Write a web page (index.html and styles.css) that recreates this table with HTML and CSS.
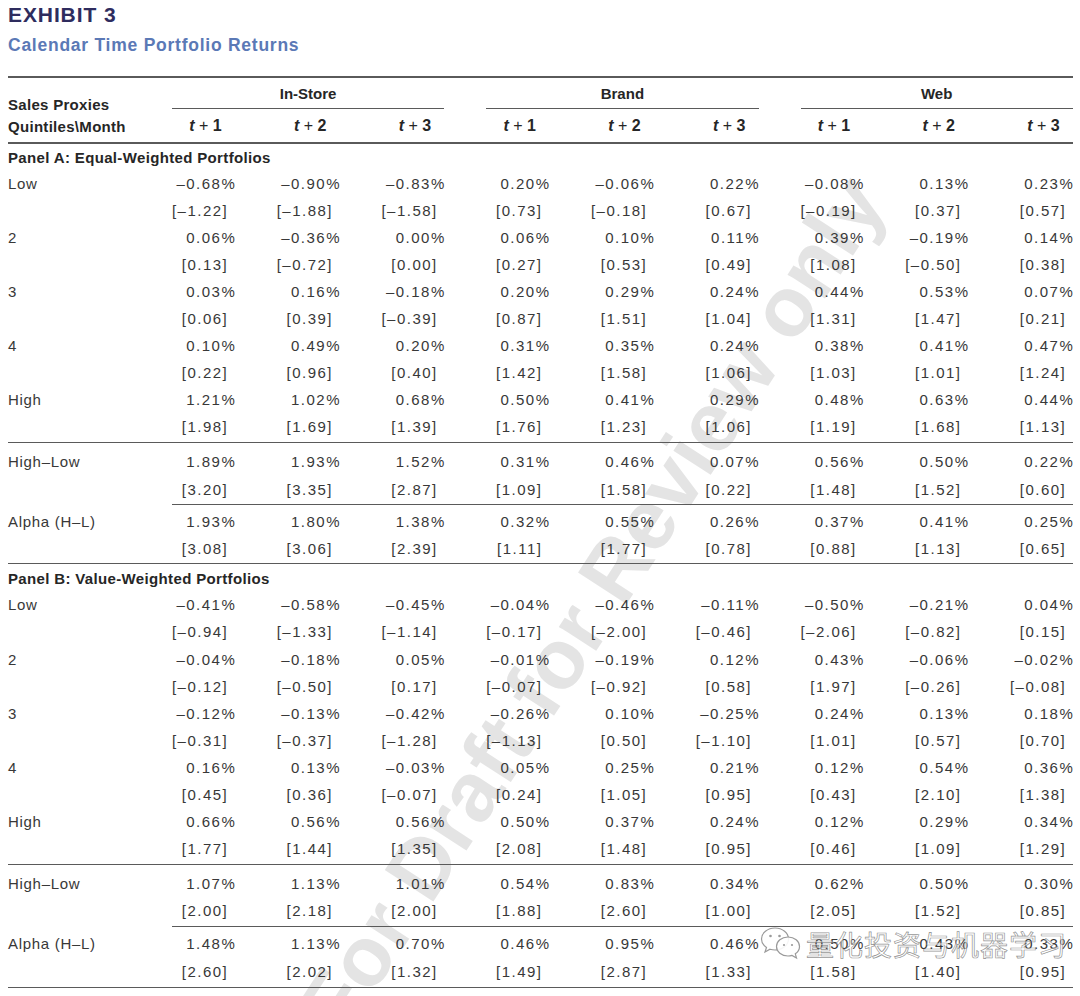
FILE: index.html
```html
<!DOCTYPE html>
<html lang="en">
<head>
<meta charset="utf-8">
<title>Exhibit 3</title>
<link rel="stylesheet" href="styles.css">
</head>
<body>
<div class="watermark">For Draft for Review only</div>
<div class="page">
  <h1 class="exhibit">EXHIBIT 3</h1>
  <h2 class="subtitle">Calendar Time Portfolio Returns</h2>

  <div class="table">
    <div class="thead">
      <div class="stub">Sales Proxies<br>Quintiles\Month</div>
      <div class="group">In-Store</div>
      <div class="group">Brand</div>
      <div class="group">Web</div>
      <div class="sub"><i>t</i> <span class="plus">+</span> 1</div>
      <div class="sub"><i>t</i> <span class="plus">+</span> 2</div>
      <div class="sub"><i>t</i> <span class="plus">+</span> 3</div>
      <div class="sub"><i>t</i> <span class="plus">+</span> 1</div>
      <div class="sub"><i>t</i> <span class="plus">+</span> 2</div>
      <div class="sub"><i>t</i> <span class="plus">+</span> 3</div>
      <div class="sub"><i>t</i> <span class="plus">+</span> 1</div>
      <div class="sub"><i>t</i> <span class="plus">+</span> 2</div>
      <div class="sub"><i>t</i> <span class="plus">+</span> 3</div>
    </div>

    <div class="panel-title first">Panel A: Equal-Weighted Portfolios</div>
    <div class="block quint">
      <div class="row"><div class="lab">Low</div><div class="c">–0.68%</div><div class="c">–0.90%</div><div class="c">–0.83%</div><div class="c">0.20%</div><div class="c">–0.06%</div><div class="c">0.22%</div><div class="c">–0.08%</div><div class="c">0.13%</div><div class="c">0.23%</div></div>
      <div class="row t"><div class="lab"></div><div class="c">[–1.22]</div><div class="c">[–1.88]</div><div class="c">[–1.58]</div><div class="c">[0.73]</div><div class="c">[–0.18]</div><div class="c">[0.67]</div><div class="c">[–0.19]</div><div class="c">[0.37]</div><div class="c">[0.57]</div></div>
      <div class="row"><div class="lab">2</div><div class="c">0.06%</div><div class="c">–0.36%</div><div class="c">0.00%</div><div class="c">0.06%</div><div class="c">0.10%</div><div class="c">0.11%</div><div class="c">0.39%</div><div class="c">–0.19%</div><div class="c">0.14%</div></div>
      <div class="row t"><div class="lab"></div><div class="c">[0.13]</div><div class="c">[–0.72]</div><div class="c">[0.00]</div><div class="c">[0.27]</div><div class="c">[0.53]</div><div class="c">[0.49]</div><div class="c">[1.08]</div><div class="c">[–0.50]</div><div class="c">[0.38]</div></div>
      <div class="row"><div class="lab">3</div><div class="c">0.03%</div><div class="c">0.16%</div><div class="c">–0.18%</div><div class="c">0.20%</div><div class="c">0.29%</div><div class="c">0.24%</div><div class="c">0.44%</div><div class="c">0.53%</div><div class="c">0.07%</div></div>
      <div class="row t"><div class="lab"></div><div class="c">[0.06]</div><div class="c">[0.39]</div><div class="c">[–0.39]</div><div class="c">[0.87]</div><div class="c">[1.51]</div><div class="c">[1.04]</div><div class="c">[1.31]</div><div class="c">[1.47]</div><div class="c">[0.21]</div></div>
      <div class="row"><div class="lab">4</div><div class="c">0.10%</div><div class="c">0.49%</div><div class="c">0.20%</div><div class="c">0.31%</div><div class="c">0.35%</div><div class="c">0.24%</div><div class="c">0.38%</div><div class="c">0.41%</div><div class="c">0.47%</div></div>
      <div class="row t"><div class="lab"></div><div class="c">[0.22]</div><div class="c">[0.96]</div><div class="c">[0.40]</div><div class="c">[1.42]</div><div class="c">[1.58]</div><div class="c">[1.06]</div><div class="c">[1.03]</div><div class="c">[1.01]</div><div class="c">[1.24]</div></div>
      <div class="row"><div class="lab">High</div><div class="c">1.21%</div><div class="c">1.02%</div><div class="c">0.68%</div><div class="c">0.50%</div><div class="c">0.41%</div><div class="c">0.29%</div><div class="c">0.48%</div><div class="c">0.63%</div><div class="c">0.44%</div></div>
      <div class="row t"><div class="lab"></div><div class="c">[1.98]</div><div class="c">[1.69]</div><div class="c">[1.39]</div><div class="c">[1.76]</div><div class="c">[1.23]</div><div class="c">[1.06]</div><div class="c">[1.19]</div><div class="c">[1.68]</div><div class="c">[1.13]</div></div>
    </div>
    <div class="block hl">
      <div class="row"><div class="lab">High–Low</div><div class="c">1.89%</div><div class="c">1.93%</div><div class="c">1.52%</div><div class="c">0.31%</div><div class="c">0.46%</div><div class="c">0.07%</div><div class="c">0.56%</div><div class="c">0.50%</div><div class="c">0.22%</div></div>
      <div class="row t"><div class="lab"></div><div class="c">[3.20]</div><div class="c">[3.35]</div><div class="c">[2.87]</div><div class="c">[1.09]</div><div class="c">[1.58]</div><div class="c">[0.22]</div><div class="c">[1.48]</div><div class="c">[1.52]</div><div class="c">[0.60]</div></div>
    </div>
    <div class="partial-rule"></div>
    <div class="block alpha">
      <div class="row"><div class="lab">Alpha (H–L)</div><div class="c">1.93%</div><div class="c">1.80%</div><div class="c">1.38%</div><div class="c">0.32%</div><div class="c">0.55%</div><div class="c">0.26%</div><div class="c">0.37%</div><div class="c">0.41%</div><div class="c">0.25%</div></div>
      <div class="row t"><div class="lab"></div><div class="c">[3.08]</div><div class="c">[3.06]</div><div class="c">[2.39]</div><div class="c">[1.11]</div><div class="c">[1.77]</div><div class="c">[0.78]</div><div class="c">[0.88]</div><div class="c">[1.13]</div><div class="c">[0.65]</div></div>
    </div>

    <div class="panel-title second">Panel B: Value-Weighted Portfolios</div>
    <div class="block quint">
      <div class="row"><div class="lab">Low</div><div class="c">–0.41%</div><div class="c">–0.58%</div><div class="c">–0.45%</div><div class="c">–0.04%</div><div class="c">–0.46%</div><div class="c">–0.11%</div><div class="c">–0.50%</div><div class="c">–0.21%</div><div class="c">0.04%</div></div>
      <div class="row t"><div class="lab"></div><div class="c">[–0.94]</div><div class="c">[–1.33]</div><div class="c">[–1.14]</div><div class="c">[–0.17]</div><div class="c">[–2.00]</div><div class="c">[–0.46]</div><div class="c">[–2.06]</div><div class="c">[–0.82]</div><div class="c">[0.15]</div></div>
      <div class="row"><div class="lab">2</div><div class="c">–0.04%</div><div class="c">–0.18%</div><div class="c">0.05%</div><div class="c">–0.01%</div><div class="c">–0.19%</div><div class="c">0.12%</div><div class="c">0.43%</div><div class="c">–0.06%</div><div class="c">–0.02%</div></div>
      <div class="row t"><div class="lab"></div><div class="c">[–0.12]</div><div class="c">[–0.50]</div><div class="c">[0.17]</div><div class="c">[–0.07]</div><div class="c">[–0.92]</div><div class="c">[0.58]</div><div class="c">[1.97]</div><div class="c">[–0.26]</div><div class="c">[–0.08]</div></div>
      <div class="row"><div class="lab">3</div><div class="c">–0.12%</div><div class="c">–0.13%</div><div class="c">–0.42%</div><div class="c">–0.26%</div><div class="c">0.10%</div><div class="c">–0.25%</div><div class="c">0.24%</div><div class="c">0.13%</div><div class="c">0.18%</div></div>
      <div class="row t"><div class="lab"></div><div class="c">[–0.31]</div><div class="c">[–0.37]</div><div class="c">[–1.28]</div><div class="c">[–1.13]</div><div class="c">[0.50]</div><div class="c">[–1.10]</div><div class="c">[1.01]</div><div class="c">[0.57]</div><div class="c">[0.70]</div></div>
      <div class="row"><div class="lab">4</div><div class="c">0.16%</div><div class="c">0.13%</div><div class="c">–0.03%</div><div class="c">0.05%</div><div class="c">0.25%</div><div class="c">0.21%</div><div class="c">0.12%</div><div class="c">0.54%</div><div class="c">0.36%</div></div>
      <div class="row t"><div class="lab"></div><div class="c">[0.45]</div><div class="c">[0.36]</div><div class="c">[–0.07]</div><div class="c">[0.24]</div><div class="c">[1.05]</div><div class="c">[0.95]</div><div class="c">[0.43]</div><div class="c">[2.10]</div><div class="c">[1.38]</div></div>
      <div class="row"><div class="lab">High</div><div class="c">0.66%</div><div class="c">0.56%</div><div class="c">0.56%</div><div class="c">0.50%</div><div class="c">0.37%</div><div class="c">0.24%</div><div class="c">0.12%</div><div class="c">0.29%</div><div class="c">0.34%</div></div>
      <div class="row t"><div class="lab"></div><div class="c">[1.77]</div><div class="c">[1.44]</div><div class="c">[1.35]</div><div class="c">[2.08]</div><div class="c">[1.48]</div><div class="c">[0.95]</div><div class="c">[0.46]</div><div class="c">[1.09]</div><div class="c">[1.29]</div></div>
    </div>
    <div class="block hl">
      <div class="row"><div class="lab">High–Low</div><div class="c">1.07%</div><div class="c">1.13%</div><div class="c">1.01%</div><div class="c">0.54%</div><div class="c">0.83%</div><div class="c">0.34%</div><div class="c">0.62%</div><div class="c">0.50%</div><div class="c">0.30%</div></div>
      <div class="row t"><div class="lab"></div><div class="c">[2.00]</div><div class="c">[2.18]</div><div class="c">[2.00]</div><div class="c">[1.88]</div><div class="c">[2.60]</div><div class="c">[1.00]</div><div class="c">[2.05]</div><div class="c">[1.52]</div><div class="c">[0.85]</div></div>
    </div>
    <div class="partial-rule"></div>
    <div class="block alpha last">
      <div class="row"><div class="lab">Alpha (H–L)</div><div class="c">1.48%</div><div class="c">1.13%</div><div class="c">0.70%</div><div class="c">0.46%</div><div class="c">0.95%</div><div class="c">0.46%</div><div class="c">0.50%</div><div class="c">0.43%</div><div class="c">0.33%</div></div>
      <div class="row t"><div class="lab"></div><div class="c">[2.60]</div><div class="c">[2.02]</div><div class="c">[1.32]</div><div class="c">[1.49]</div><div class="c">[2.87]</div><div class="c">[1.33]</div><div class="c">[1.58]</div><div class="c">[1.40]</div><div class="c">[0.95]</div></div>
    </div>
  </div>
</div>

<div class="wechat">
  <svg class="wechat-icon" width="44" height="36" viewBox="0 0 44 36" aria-hidden="true">
    <path d="M15 2 C7.5 2 1.5 7 1.5 13 C1.5 16.5 3.5 19.5 6.5 21.5 L5 26 L10 23.2 C11.6 23.7 13.3 24 15 24 C22.5 24 28.5 19 28.5 13 C28.5 7 22.5 2 15 2 Z" fill="rgba(255,255,255,0.85)" stroke="#9a9a9a" stroke-width="1.2"/>
    <circle cx="10.5" cy="10" r="1.3" fill="#9a9a9a"/>
    <circle cx="19.5" cy="10" r="1.3" fill="#9a9a9a"/>
    <path d="M28 11 C21.5 11 16.5 15.3 16.5 20.5 C16.5 25.7 21.5 30 28 30 C29.4 30 30.7 29.8 32 29.4 L36.5 32 L35.3 27.8 C38 26 39.5 23.4 39.5 20.5 C39.5 15.3 34.5 11 28 11 Z" fill="rgba(255,255,255,0.9)" stroke="#9a9a9a" stroke-width="1.2"/>
    <circle cx="24" cy="19" r="1.1" fill="#9a9a9a"/>
    <circle cx="32" cy="19" r="1.1" fill="#9a9a9a"/>
  </svg>
  <span class="wechat-text">量化投资与机器学习</span>
</div>
</body>
</html>
```

FILE: styles.css
```css
* {
  box-sizing: border-box;
  margin: 0;
  padding: 0;
}

html {
  overflow: hidden;
  background: #ffffff;
}

body {
  width: 1080px;
  height: 996px;
  overflow: hidden;
  position: relative;
  background: #ffffff;
  font-family: "Liberation Sans", Arial, sans-serif;
  color: #383838;
}

.page {
  position: relative;
  z-index: 1;
  padding: 3px 7px 0 8px;
}

.exhibit {
  font-size: 21px;
  line-height: 24px;
  font-weight: bold;
  letter-spacing: 0.9px;
  color: #2e2c5e;
}

.subtitle {
  margin-top: 6px;
  font-size: 17.5px;
  line-height: 24px;
  font-weight: bold;
  letter-spacing: 0.75px;
  color: #5b79b6;
}

.table {
  margin-top: 19px;
  width: 1065px;
  border-top: 2px solid #5a5a5a;
}

.thead {
  display: grid;
  grid-template-columns: 122px repeat(9, 104.75px);
  grid-template-rows: auto auto;
  border-bottom: 2px solid #5a5a5a;
  font-weight: bold;
  font-size: 15px;
  color: #262626;
}

.stub {
  grid-row: 1 / 3;
  grid-column: 1;
  align-self: end;
  line-height: 21.5px;
  padding-bottom: 4.5px;
  letter-spacing: 0.3px;
  white-space: nowrap;
}

.group {
  grid-column: span 3;
  grid-row: 1;
  margin-left: 42px;
  padding: 4px 0 2px;
  line-height: 24px;
  text-align: center;
  border-bottom: 1.5px solid #5a5a5a;
}

.sub {
  grid-row: 2;
  padding: 5px 13px 3.5px 0;
  line-height: 24px;
  font-size: 16px;
  text-align: right;
  white-space: nowrap;
}

.sub i {
  font-style: italic;
}

.plus {
  font-weight: normal;
}

.panel-title {
  padding-top: 2.5px;
  line-height: 24px;
  font-size: 15px;
  font-weight: bold;
  letter-spacing: 0.35px;
  color: #262626;
}

.panel-title.first {
  padding-top: 2px;
}

.panel-title.second {
  padding-top: 3.5px;
}

.block {
  display: flex;
  flex-direction: column;
}

.block.quint {
  padding-bottom: 1.5px;
  border-bottom: 1.5px solid #5a5a5a;
}

.block.hl {
  padding-top: 5.5px;
  padding-bottom: 1.5px;
}

.block.alpha {
  padding-top: 2.5px;
  padding-bottom: 1px;
  border-bottom: 1.5px solid #5a5a5a;
}

.block.alpha.last {
  padding-top: 3.5px;
  padding-bottom: 2.5px;
}

.partial-rule {
  margin-left: 164px;
  border-top: 1.5px solid #5a5a5a;
}

.row {
  display: grid;
  grid-template-columns: 122px repeat(9, 104.75px);
  height: 27.1px;
  line-height: 27.1px;
  font-size: 15px;
}

.lab {
  letter-spacing: 0.7px;
  white-space: nowrap;
}

.c {
  text-align: right;
  letter-spacing: 1.5px;
  margin-right: -1.5px;
  white-space: nowrap;
}

.row.t .c {
  padding-right: 8px;
}

.watermark {
  position: absolute;
  left: 592px;
  top: 605px;
  z-index: 0;
  transform: translate(-50%, -50%) rotate(-57deg);
  font-family: "Liberation Sans", Arial, sans-serif;
  font-weight: bold;
  font-size: 84px;
  color: #e4e4e4;
  white-space: nowrap;
}

.wechat {
  position: absolute;
  left: 760px;
  top: 926px;
  z-index: 2;
  display: flex;
  align-items: center;
  gap: 2px;
}

.wechat-icon {
  display: block;
}

.wechat-text {
  font-family: "Noto Sans CJK SC", "Noto Sans CJK TC", sans-serif;
  font-size: 28px;
  line-height: 36px;
  letter-spacing: 1px;
  color: rgba(255, 255, 255, 0.55);
  -webkit-text-stroke: 0.7px rgba(110, 110, 110, 0.75);
}
```
